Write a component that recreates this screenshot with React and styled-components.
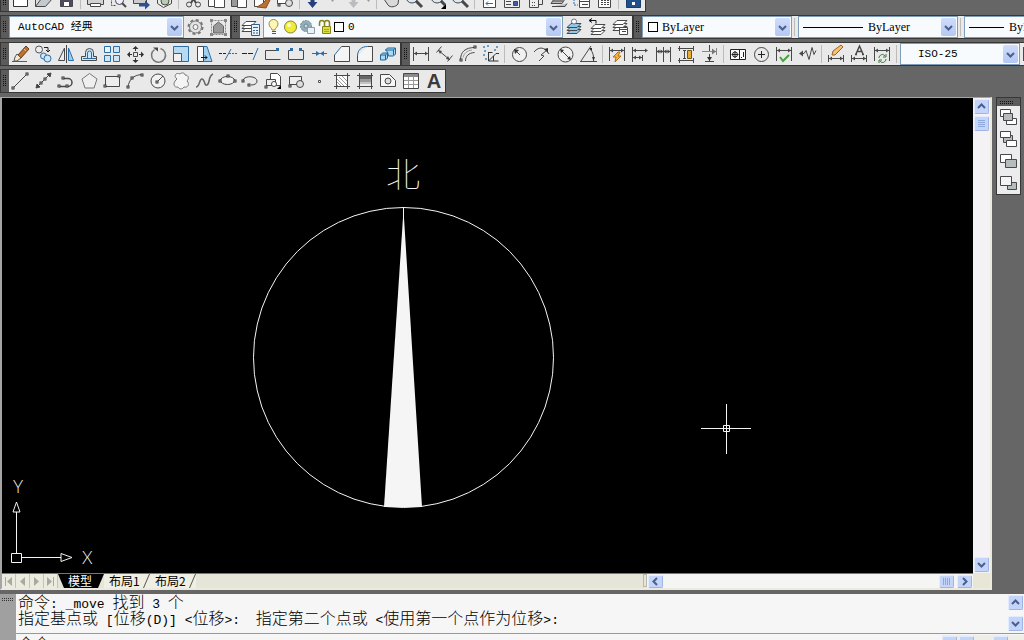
import React from 'react'
import styled, { createGlobalStyle, ThemeProvider } from 'styled-components'

const theme = {
  chrome: '#666666',
  bar: '#e9e9ea',
  edge: '#373737',
  field: '#f7fbfd',
  fieldBorder: '#7f9db9',
  canvas: '#000000',
  line: '#f5f5f5',
  beige: '#e6e6d8',
  scroll: '#c5d5fa',
  arrow: '#4a5f8c',
  cjk: '"Noto Sans CJK SC", sans-serif',
  mono: '"Liberation Mono", "Noto Sans CJK SC", monospace',
  serif: '"Liberation Serif", "Noto Sans CJK SC", serif',
}

const GlobalStyle = createGlobalStyle`
  *, *::before, *::after { box-sizing:border-box; }
  body {
    margin:0;
    background:${theme.chrome};
    font-family:${theme.cjk};
    font-size:12px;
    overflow:hidden;
  }
  button, select, input { font:inherit; margin:0; padding:0; color:inherit; }
`

/* Frame */
const Shell = styled.div`
  display:flex;
  flex-direction:column;
  height:100vh;
  overflow:hidden;
`
const ToolbarArea = styled.header`
  display:flex;
  flex-direction:column;
  gap:3px;
  padding-bottom:4px;
`
const ToolbarRow = styled.div`
  display:flex;
  align-items:flex-end;
  overflow:hidden;
  height:${p => (p.$tucked ? 12 : 24)}px;
`
const Bar = styled.div`
  flex:none;
  display:flex;
  height:24px;
  border:1px solid ${p => p.theme.edge};
  background:${p => p.theme.bar};
`
const Grip = styled.div`
  flex:none;
  width:8px;
  padding:4px 2px;
  background:#5b5b5b;
  &::before {
    content:'';
    display:block;
    height:13px;
    background:repeating-linear-gradient(#5b5b5b 0 1px, transparent 1px 2px), repeating-linear-gradient(90deg, #111 0 1px, #5b5b5b 1px 2px);
  }
`
const Divider = styled.div`
  flex:none;
  width:6px;
  padding:2px;
  &::before {
    content:'';
    display:block;
    width:1px;
    height:18px;
    background:#bcbcb8;
  }
`
const ToolButton = styled.button`
  flex:none;
  display:flex;
  align-items:center;
  justify-content:center;
  width:${p => p.$width || 23}px;
  height:22px;
  border:0;
  background:transparent;
  overflow:hidden;
  &:hover { background:#d3dcea; }
`
const Glyph = styled.svg`
  flex:none;
  display:block;
  fill:none;
  stroke:#484848;
`

/* Drop-downs */
const Combo = styled.label`
  flex:none;
  display:flex;
  align-items:center;
  width:${p => p.$width}px;
  height:22px;
  padding-left:${p => p.$indent || 4}px;
  border:1px solid ${p => p.theme.fieldBorder};
  background:${p => p.theme.field};
  color:#000;
`
const Select = styled.select`
  flex:1;
  min-width:0;
  height:20px;
  appearance:none;
  border:0;
  outline:0;
  background:transparent;
  font-family:${p => (p.$serif ? p.theme.serif : p.theme.mono)};
  font-size:${p => (p.$serif ? 12 : 11)}px;
`
const Drop = styled.span`
  flex:none;
  display:flex;
  align-items:center;
  justify-content:center;
  width:15px;
  height:18px;
  margin-right:1px;
  border-radius:2px;
  background:linear-gradient(#cfdcfb, #b5c8f3);
`
const Swatch = styled.span`
  flex:none;
  width:10px;
  height:10px;
  margin-right:4px;
  border:1px solid #000;
  background:#fff;
`
const LineSample = styled.span`
  flex:none;
  width:${p => p.$length}px;
  height:1px;
  margin-right:5px;
  background:#000;
`

/* Drawing window */
const Workspace = styled.main`
  flex:1;
  min-height:0;
  display:flex;
`
const DrawingWindow = styled.section`
  flex:1;
  min-width:0;
  display:grid;
  grid-template-columns:1fr 17px;
  grid-template-rows:1fr 15px;
  border:solid;
  border-width:1px 2px 2px 2px;
  border-color:#a5a5a5 #eceadf #eceadf #a5a5a5;
`
const Canvas = styled.svg`
  display:block;
  width:100%;
  height:100%;
  min-height:0;
  background:${p => p.theme.canvas};
  fill:none;
  stroke:${p => p.theme.line};
`
const CanvasText = styled.text`
  fill:${p => p.theme.line};
  stroke:none;
  font-family:${p => (p.$cjk ? p.theme.cjk : '"Lato", sans-serif')};
  font-size:${p => (p.$cjk ? 34 : 17)}px;
  font-weight:${p => (p.$cjk ? 100 : 300)};
`
const VScroll = styled.div`
  display:flex;
  flex-direction:column;
  align-items:center;
  gap:2px;
  padding:1px 0;
  background:#f4f2f4;
`
const HScroll = styled.div`
  display:flex;
  align-items:center;
  gap:3px;
  width:326px;
  padding:0 1px;
  background:#f5f5f3;
`
const Splitter = styled.span`
  flex:none;
  width:4px;
  height:13px;
  border:1px solid #b9b9a8;
  background:${p => p.theme.beige};
`
const Track = styled.span`
  flex:1;
`
const ScrollButton = styled.button`
  flex:none;
  display:flex;
  align-items:center;
  justify-content:center;
  width:15px;
  height:${p => p.$height || 15}px;
  border:1px solid #9fb5e4;
  border-top-color:#e3ebfe;
  border-left-color:#e3ebfe;
  border-radius:2px;
  background:${p => p.theme.scroll};
`
const Corner = styled.div`
  background:#e8e6d6;
`
const TabStrip = styled.div`
  display:flex;
  min-width:0;
  border-top:1px solid #77776f;
  background:${p => p.theme.beige};
`
const NavButton = styled.button`
  flex:none;
  display:flex;
  align-items:center;
  justify-content:center;
  width:14px;
  height:14px;
  border:0;
  border-right:1px solid #c4c4b6;
  background:#ebebe0;
`
const Tab = styled.button`
  position:relative;
  flex:none;
  width:46px;
  height:14px;
  border:0;
  padding-left:5px;
  background:#efefe4;
  color:#000;
  font-size:12px;
  line-height:14px;
  text-align:left;
  white-space:nowrap;
  &::after {
    content:'';
    position:absolute;
    top:0;
    right:3px;
    width:1px;
    height:14px;
    background:#55554f;
    transform:skewX(-23deg);
  }
  &[aria-selected='true'] {
    padding-left:10px;
    background:#000;
    color:#fff;
    clip-path:polygon(0 0, 100% 0, calc(100% - 6px) 100%, 6px 100%);
  }
  &[aria-selected='true']::after { display:none; }
`
const Spacer = styled.div`
  flex:1;
`

/* Draw order palette */
const Dock = styled.aside`
  flex:none;
  width:32px;
  padding-left:4px;
`
const Palette = styled.div`
  width:25px;
  border:1px solid ${p => p.theme.edge};
  background:#ececee;
`
const PaletteGrip = styled.div`
  height:8px;
  padding:2px 3px;
  background:#5b5b5b;
  &::before {
    content:'';
    display:block;
    width:14px;
    height:4px;
    background:repeating-linear-gradient(#5b5b5b 0 1px, transparent 1px 2px), repeating-linear-gradient(90deg, #111 0 1px, #5b5b5b 1px 2px);
  }
`

/* Command line */
const CommandPane = styled.section`
  flex:none;
  display:flex;
  height:46px;
  margin-top:4px;
  overflow:hidden;
  background:#f6f6f6;
  color:#000;
`
const CommandGrip = styled.div`
  flex:none;
  width:16px;
  padding:3px 2px;
  background:#a0a0a0;
  &::before {
    content:'';
    display:block;
    height:4px;
    background:repeating-linear-gradient(#a0a0a0 0 1px, transparent 1px 2px), repeating-linear-gradient(90deg, #333 0 1px, #a0a0a0 1px 2px);
  }
`
const CommandBody = styled.div`
  flex:1;
  min-width:0;
`
const HistoryRow = styled.div`
  display:flex;
  height:40px;
  border-bottom:1px solid #999;
`
const History = styled.div`
  flex:1;
  padding-left:2px;
`
const Line = styled.p`
  margin:0;
  height:16px;
  font-size:16px;
  font-weight:300;
  line-height:15px;
  white-space:pre;
`
const Ascii = styled.span`
  font-family:"Liberation Mono", monospace;
  font-size:13px;
`
const HistoryScroll = styled.div`
  flex:none;
  display:flex;
  flex-direction:column;
  justify-content:space-between;
  width:16px;
  padding:1px 0 2px;
`
const PromptRow = styled.div`
  display:flex;
  gap:2px;
  padding:1px 0 0 2px;
`
const Prompt = styled.label`
  flex:none;
  font-size:16px;
  font-weight:300;
  line-height:16px;
`
const PromptInput = styled.input`
  flex:1;
  min-width:0;
  height:16px;
  border:0;
  outline:0;
  background:transparent;
`
const PromptScroll = styled.div`
  flex:none;
  display:flex;
  gap:2px;
  width:82px;
  padding-top:1px;
  background:#efeee6;
`

const BLUE = '#2b6ea6'
const PALE = '#cfe6f6'

const Node = ({ x, y }) => <rect x={x - 1} y={y - 1} width="2" height="2" fill="#fff" stroke="#333" />
const Dot = ({ x, y, c = BLUE }) => <rect x={x} y={y} width="3" height="3" fill={c} stroke="none" />
const Extents = ({ y = 10.5, top = 4, bottom = 18 }) => (
  <>
    <path d={`M3.5 ${top}V${bottom}M18.5 ${top}V${bottom}M4 ${y}h14`} />
    <path d={`M4 ${y}l3-2v4zM18 ${y}l-3-2v4z`} fill="#484848" stroke="none" />
  </>
)
const Layers = ({ x = 0, y = 0, fill = '#fff' }) => (
  <g transform={`translate(${x} ${y})`} fill={fill}>
    <path d="M3 14.5h10l4-4h-10z" />
    <path d="M3 11.5h10l4-4h-10z" />
    <path d="M3 8.5h10l4-4h-10z" />
  </g>
)

// 23 x 22 grid, one entry for each tool
const icons = {
  new: <path d="M4.5 2.5h14v15h-14z" fill="#fff" stroke="#333" />,
  open: <><path d="M3.5 17.5v-12h5l2 2h7v3" fill="#ddd" /><path d="M3.5 17.5l6-8h11l-7 8z" fill="#c5c8cc" /></>,
  save: <><path d="M5.5 4.5h12v13h-12z" fill="#4b4b62" /><path d="M8.5 12.5h6v5h-6z" fill="#fff" /></>,
  print: <><path d="M3.5 8.5h16v7h-16z" fill="#d2d2d2" /><path d="M6.5 14.5h10v3h-10z" fill="#fff" /></>,
  preview: <><path d="M4.5 3.5v13h4" strokeDasharray="2 1" /><circle cx="12.5" cy="11.5" r="4" fill="#eef" /><path d="M15 14l4 4" strokeWidth="2" /></>,
  publish: <><path d="M3.5 8.5h13v6h-13z" fill="#ccc" /><path d="M9 14.5h6v-3l5 4.5-5 4.5v-3H9z" fill="#2a5294" stroke="none" /></>,
  dwf: <><path d="M4.5 5.5l9-2 5 4v7l-8 4-6-4z" fill="#e9ecea" /><circle cx="12" cy="12" r="4" fill="#b8ccb3" /></>,
  cut: <><path d="M8 4l6 10M15 4L9 14" strokeWidth="2" /><circle cx="7" cy="15.5" r="2.5" /><circle cx="16" cy="15.5" r="2.5" /></>,
  copyclip: <><path d="M3.5 4.5h9v13h-9z" fill="#fff" /><path d="M9.5 7.5h10v11h-10z" fill="#fff" /></>,
  paste: <><path d="M3.5 4.5h12v13h-12z" fill="#999" /><path d="M9.5 9.5h9v9h-9z" fill="#fff" /></>,
  match: <><path d="M3.5 8.5h9v9h-9z" fill="#fff" /><path d="M18 8l-7 7-5 3 9 1 4-8z" fill="#b87333" stroke="#8a4c22" /></>,
  blockedit: <><path d="M3.5 8.5h10v6h-10z" fill="#fff" /><circle cx="15" cy="14" r="3.5" fill="#ddd" /><Node x={5} y={16} /></>,
  undo: <path d="M9.5 4h4v9h3l-5 6-5-6h3z" fill="#24407e" stroke="none" />,
  redo: <path d="M9.5 4h4v9h3l-5 6-5-6h3z" fill="#bcbcc0" stroke="none" />,
  more: <path d="M10 11h3l-1.5 2z" fill="#999" stroke="none" />,
  pan: <path d="M4 10l4 6c2 3 8 2 10-1l1-7-3-2-4 4-3-5z" fill="#d9d9d9" />,
  zoom: <><circle cx="9" cy="8" r="6" fill="#dfe8f0" /><path d="M13 12l6 6" strokeWidth="3" /></>,
  zoomWin: <><circle cx="11" cy="8" r="6" fill="#dfe8f0" /><path d="M15 12l4 4" strokeWidth="3" /><path d="M20 15v5h-5z" fill="#000" stroke="none" /></>,
  props: <><path d="M5.5 3.5h12v15h-12z" fill="#fff" /><path d="M8 14.5h7M8 14.5l2-2M8 14.5l2 2" stroke={BLUE} /></>,
  center: <><path d="M3.5 4.5h15v14h-15z" fill="#eee" /><path d="M12.5 12.5h4v4h-4z" fill="#445ea6" /><path d="M5 12.5h5M5 15.5h5" /></>,
  palettes: <><path d="M5.5 3.5h9v15h-9z" fill="#eee" /><path d="M8 13.5h4M8 16.5h4" strokeDasharray="1 1" /><path d="M14.5 9.5h4v6h-4z" /></>,
  sheet: <path d="M4 14.5h11l4-6H8zM5 17.5h13l2-3M6 12h10" fill="#bbb" />,
  markup: <><path d="M4 4v12h4" stroke={BLUE} strokeDasharray="2 1" /><path d="M9.5 9.5h10v9h-10z" fill="#fff" /><path d="M9 12.5h10M12 15.5h6" /></>,
  calc: <><path d="M5.5 3.5h12v15h-12z" fill="#fff" /><path d="M8 11.5h8M8 13.5h8M8 15.5h8" strokeDasharray="2 1" /></>,
  help: <><path d="M4.5 3.5h14v15h-14z" fill="#1f4f8c" stroke="#1a3d6c" /><path d="M11.5 4v7M11.5 13v3" stroke="#fff" strokeWidth="3" /></>,

  gear: <><circle cx="11.5" cy="11" r="7" strokeWidth="2" strokeDasharray="3 2.5" stroke="#777" /><circle cx="11.5" cy="11" r="6" fill="#e4e4e4" stroke="#777" /><circle cx="11.5" cy="11" r="2.5" fill="#f4f4f4" stroke="#777" /></>,
  wsSave: <><path d="M4.5 4.5h14v14h-14z" strokeDasharray="2 1" stroke="#888" /><path d="M3 3h3v3H3zM17 3h3v3h-3zM3 17h3v3H3zM17 17h3v3h-3z" fill="#888" stroke="none" /><path d="M6.5 10l5-4 5 4v7h-10z" fill="#999" stroke="#666" /></>,
  layerProps: <><Layers y={1} x={-1} /><path d="M11.5 8.5h8v11h-8z" fill="#e7f2fb" stroke="#345f8c" /><path d="M13 11.5h5M13 14.5h2M16 14.5h2M13 17h2M16 17h2" stroke="#345f8c" /></>,
  layerCurrent: <><Layers y={3} x={1} fill="#8fc8ea" /><circle cx="11" cy="5.5" r="2.5" fill="#fff" stroke="#6c7780" /></>,
  layerPrev: <><Layers y={4} x={2} /><path d="M4 4.5h6v3M6 2.5l-3 2 3 2" stroke="#111" /></>,
  layerStates: <><Layers y={0} x={1} /><path d="M10.5 11.5h8v7h-8z" fill="#fff" /><path d="M11 13.5h7M13 15.5h4" /></>,

  erase: <><path d="M3 18.5h15" stroke="#9b4a20" /><path d="M9 12l8-9 3 3-8 9z" fill="#b87333" stroke="#6b3d1c" /><path d="M8 11l4 4-4 3H5l1-4z" fill="#f7e9d2" stroke="#555" /><path d="M15 6l2 2" stroke="#efc389" /></>,
  copy: <><circle cx="7" cy="6.5" r="3.5" fill="#eee" stroke="#555" /><circle cx="11.5" cy="13" r="3" fill={PALE} stroke={BLUE} /><circle cx="15.5" cy="15.5" r="3.5" fill={PALE} stroke={BLUE} /><path d="M12 4.5h4v4M14 7l2 2 2-2" stroke="#222" /></>,
  mirror: <><path d="M9.5 5v12.5h-6z" fill="#eee" /><path d="M11.5 2v18" /><path d="M13.5 5v12.5h5z" fill="#9ecdec" stroke={BLUE} /></>,
  offset: <><path d="M3.5 17.5v-4h4v-4a4 4 0 0 1 8 0v4h3v4z" fill={PALE} /><path d="M5 15.5h13M9.5 15v-5a2 2 0 0 1 4 0v5" stroke={BLUE} /></>,
  array: <g fill={PALE} stroke={BLUE}><path d="M3.5 3.5h6v6h-6z" fill="#f0f0f0" /><path d="M12.5 3.5h6v6h-6zM3.5 12.5h6v6h-6zM12.5 12.5h6v6h-6z" /></g>,
  move: <><path d="M9.5 9.5h4v4h-4z" /><path d="M11.5 5v3M11.5 15v3M5 11.5h3M15 11.5h3" stroke="#333" /><path d="M11.5 3l3 3h-6zM11.5 20l3-3h-6zM3 11.5l3-3v6zM20 11.5l-3-3v6z" fill="#333" stroke="none" /></>,
  rotate: <><path d="M7.5 6.5a7 7 0 1 0 6-1" strokeWidth="1.5" stroke="#777" /><path d="M6 4.5h5v4z" fill="#444" stroke="none" /></>,
  scale: <><path d="M3.5 3.5h15v15h-15z" fill="#b8daf0" stroke={BLUE} /><path d="M3.5 18.5v-8h8v8z" fill="#f0f0f0" stroke="#555" /></>,
  stretch: <><path d="M10 3.5h4l5 15h-9z" fill="#9fd0f0" stroke={BLUE} /><path d="M4.5 3.5h6v15h-6z" fill="#fafafa" /><path d="M8 14.5h6M12 12.5l2 2-2 2" stroke="#111" /></>,
  trim: <><path d="M3 10.5h3M7 10.5h3" stroke="#222" /><path d="M13 10.5h8" stroke={BLUE} strokeDasharray="2 1" /><path d="M9 17l6-11" stroke={BLUE} /></>,
  extend: <><path d="M3 10.5h12" stroke="#222" strokeDasharray="5 1" /><path d="M14 17l5-12" stroke={BLUE} /></>,
  breakAt: <><path d="M15 7.5H3.5v9h15" /><Dot x={14} y={5} /></>,
  breakTwo: <><path d="M6 7.5H3.5v9h15v-9h-3" /><Dot x={5} y={5} /><Dot x={14} y={5} /></>,
  join: <><path d="M4 10.5h15" stroke={BLUE} /><path d="M8 8l4 2.5-4 2.5zM16 8l-4 2.5 4 2.5z" fill={BLUE} stroke="none" /></>,
  chamfer: <><path d="M3.5 12v6.5h15v-15h-8" fill="#f5f5f5" /><path d="M3.5 12l7-8.5" stroke={BLUE} /></>,
  fillet: <><path d="M3.5 13v5.5h15v-15h-5" fill="#f5f5f5" /><path d="M3.5 13c0-6 4-9.5 10-9.5" stroke={BLUE} /></>,
  explode: <g fill="#a9daf5" stroke="#1f6799"><path d="M3.5 12l2-2h5v5l-2 2h-5zM3.5 12h5v5M8.5 12l2-2" /><path d="M8.5 7l2-2h8v6l-2 2h-5l-1-4zM8.5 7h8v5M16.5 7l2-2" /></g>,

  dimLinear: <Extents />,
  dimAligned: <><path d="M5 7l12 10M3.5 9.5l5-6M14.5 18.5l5-6" /><path d="M5 7l4 1-2 3zM17 17l-4-1 2-3z" fill="#484848" stroke="none" /></>,
  dimArc: <><path d="M4.5 17C4.5 9 9 4.5 19 4.5M9.5 18c0-5 3-8 9-8.5" /><path d="M7 14.500c1-4 4-7 9-7.500" stroke="#999" /><Node x={5} y={17} /><Node x={19} y={4} /></>,
  dimOrd: <><path d="M9.5 9v9h10M9.5 18L17 10.5h3M14.5 13v5M9.5 9.5h4" stroke="#333" /><path d="M4 3h2v2H4zM8 2h2v2H8zM17 3h2v2h-2zM5 7h2v2H5zM4 11h2v2H4zM6 15h2v2H6zM15 6h2v2h-2z" fill="#6d9cc4" stroke="none" /></>,
  dimRadius: <><circle cx="11.5" cy="11.5" r="7" fill="#f1f1f1" /><path d="M12 12L7 7" /><path d="M6 6l5 1-4 4z" fill="#333" stroke="none" /></>,
  dimJog: <><path d="M3 9c5-6 11-5 15 2M8 18l5-5-3-1 6-5" /><path d="M17 5v5l-4-4z" fill="#333" stroke="none" /></>,
  dimDia: <><circle cx="11.5" cy="11.5" r="7.5" fill="#f1f1f1" /><path d="M6 6l11 11" /><path d="M6 6l4 1-3 3zM17 17l-4-1 3-3z" fill="#333" stroke="none" /></>,
  dimAng: <><path d="M3 18.5h17M4 18l10-15M13 6c3 3 4 7 3.5 12" /><path d="M12 5h3v3zM15 14h3l-1.5 4z" fill="#333" stroke="none" /></>,
  quick: <><Extents y={7.5} /><path d="M12 9l-5 5h3l-1 5 6-6h-3l2-4z" fill="#f6b53c" stroke="#b3701b" /></>,
  baseline: <><path d="M3.5 4v15M13.5 12v6M4 7.5h14M4 14.5h9" /><path d="M4 7.5l3-2v4zM19 7.5l-3-2v4zM4 14.5l3-2v4zM13 14.5l-3-2v4z" fill="#484848" stroke="none" /></>,
  continueDim: <><path d="M4.5 4v15M11.5 4v15M18.5 4v15M5 8.5h13" /><path d="M11.5 8.5l-3-2v4zM11.5 8.5l3-2v4zM18.5 8.5l-3-2v4zM4.5 8.5l3-2v4z" fill="#484848" stroke="none" /></>,
  dimSpace: <><path d="M3 5.5h16M3 17.5h16M4.5 3v5M18.5 3v5M4.5 15v5M18.5 15v5M8 7.5h3M8 15.5h3M9.5 7v9" /><path d="M12.5 7.5h4v8h-4z" fill="#e6ad33" stroke="#765514" /></>,
  dimBreak: <><path d="M11.5 2v6M7 18.5h9M11.5 11v7" /><path d="M4 8.5h14M18.5 5v7" stroke="#888" /><path d="M18 8.5l-4-3v6z" fill="#777" stroke="none" /><path d="M9 14h5l-2.5 4z" fill="#333" stroke="none" /></>,
  tolerance: <><path d="M3.5 6.5h15v10h-15zM12.5 7v9" fill="#fafafa" stroke="#222" /><circle cx="8" cy="11.5" r="2.5" stroke="#222" /><path d="M4.5 11.5h7M8 8v7M16.5 9v5M14 14.5h1" stroke="#222" /></>,
  centerMark: <><circle cx="11.5" cy="11.5" r="7" /><path d="M8 11.5h7M11.5 8v7" stroke="#222" /></>,
  inspect: <><Extents y={7.5} /><path d="M7 14l3 4 6-6" stroke="#45a33c" strokeWidth="2" /></>,
  jogLine: <><path d="M4 10.5h4l2-3 3 9 3-12 2 7 2-4" /><path d="M3 10.5l4-3v6z" fill="#484848" stroke="none" /></>,
  dimEdit: <><Extents y={15.5} top={12} bottom={19} /><path d="M7 12l1-4 8-6 2 2-8 8z" fill="#f5c072" stroke="#9a6526" /></>,
  dimTextEdit: <><Extents y={15.5} top={12} bottom={19} /><path d="M7 11.5h2M14 11.5h2M8 11l3.5-8 3.5 8M9 8.5h5" strokeWidth="1.5" /></>,
  dimUpdate: <><Extents y={7.5} /><path d="M8 15c0-3 4-5 6-2M15 11v3h-3M15 16c0 3-4 5-6 2M8 20v-3h3" stroke="#37793a" /></>,

  line: <><path d="M4 18L18 4" /><Node x={4} y={18} /><Node x={18} y={4} /></>,
  xline: <><path d="M4 18L18 4" /><path d="M4 18l1-4 3 3zM19 3l-4 1 3 3z" fill="#444" /><Node x={9} y={13} /><Node x={13} y={9} /></>,
  pline: <><path d="M4 16.5h9a4 4 0 0 0 0-8H8" strokeWidth="1.5" /><Node x={4} y={16} /><Node x={12} y={16} /><Node x={8} y={8} /></>,
  polygon: <path d="M11.5 3.5l7.5 5.5-3 9h-9l-3-9z" fill="#efefef" stroke="#777" />,
  rect: <><path d="M4.5 6.5h14v10h-14z" fill="#eee" /><Node x={4} y={16} /><Node x={18} y={6} /></>,
  arc: <><path d="M4 17C5 10 9 5 18 4.5" /><Node x={4} y={17} /><Node x={8} y={8} /><Node x={18} y={5} /></>,
  circle: <><circle cx="11" cy="11" r="7" fill="#f1f1f1" /><path d="M11 11l5-5" /><Node x={10} y={12} /></>,
  cloud: <path d="M7 9c-4-3-1-7 3-5 2-2 5-1 5 1 4 0 4 4 2 6 3 3 1 7-3 6-2 3-5 2-6 0-4 1-6-4-1-8z" fill="#f4f4f4" stroke="#777" />,
  spline: <path d="M3 17c4 0 3-8 6-8s2 7 5 6 1-9 6-11" stroke="#666" strokeWidth="1.5" />,
  ellipse: <><ellipse cx="11.5" cy="10.5" rx="7" ry="4" fill="#f1f1f1" /><Node x={4} y={11} /><Node x={12} y={6} /><Node x={19} y={11} /></>,
  ellipseArc: <><path d="M4 10c2-5 14-4 14 1 0 3-3 4-6 4" /><Node x={4} y={11} /><Node x={10} y={15} /></>,
  insert: <><path d="M8.5 3.5h7l3 3v9h-10z" fill="#fff" /><path d="M4.5 9.5h9v6h-9z" fill="#eee" /><circle cx="12" cy="14" r="2.5" fill="#fff" /><Node x={4} y={17} /><path d="M19 15v4h-4z" fill="#000" stroke="none" /></>,
  block: <><path d="M4.5 6.5h12v8h-12z" fill="#eee" /><circle cx="15" cy="14" r="3.5" fill="#ddd" /><Node x={5} y={16} /></>,
  point: <path d="M10.5 10.5h2v2h-2z" fill="#fff" stroke="#555" />,
  hatch: <><path d="M5.5 5.5h11v11h-11z" fill="#fff" /><path d="M3 5.5h16M3 16.5h16M5.5 3v16M16.5 3v16" /><path d="M6 9l7 7M6 12l4 4M8 7l8 8M11 6l5 5M6 15l1 1" stroke="#999" /></>,
  gradient: <><path d="M5.5 5.5h12v11h-12z" fill="#eee" /><path d="M6 6h11v3H6z" fill="#666" stroke="none" /><path d="M6 9h11v3H6z" fill="#999" stroke="none" /><path d="M6 12h11v2H6z" fill="#c3c3c3" stroke="none" /><path d="M3 5.5h16M3 16.5h16M5.5 3v16M17.5 3v16" /></>,
  region: <><path d="M3.5 4.5h9l6 6v6h-15z" fill="#f7f7f7" /><circle cx="11" cy="11" r="3" fill="#ddd" /></>,
  table: <><path d="M3.5 3.5h15v15h-15z" fill="#fff" /><path d="M4 4h14v3H4z" fill="#8b8b8b" stroke="none" /><path d="M4 10.5h14M4 14.5h14M8.5 7v11M13.5 7v11" stroke="#999" /></>,

  front: <><path d="M3.5 3.5h10v7h-10z" fill="#fff" /><path d="M9.5 12.5h10v6h-10z" fill="#fff" /><path d="M6.5 7.5h9v7h-9z" fill="#b5bcbc" /></>,
  back: <><path d="M6.5 7.5h9v7h-9z" fill="#b5bcbc" /><path d="M3.5 3.5h10v6h-10zM9.5 12.5h10v6h-10z" fill="#fff" /></>,
  above: <><path d="M3.5 4.5h11v8h-11z" fill="#fff" /><path d="M8.5 9.5h11v8h-11z" fill="#b5bcbc" /></>,
  under: <><path d="M10.5 10.5h9v7h-9z" fill="#b5bcbc" /><path d="M3.5 4.5h11v9h-11z" fill="#f2f4f8" /></>,
}

const Tool = ({ icon, label, width }) => (
  <ToolButton aria-label={label || icon} $width={width}>
    <Glyph width="23" height="22" viewBox="0 0 23 22">{icons[icon]}</Glyph>
  </ToolButton>
)

// '|' stands for a divider
const Tools = ({ items }) => items.split(' ').map((name, i) => (
  name === '|' ? <Divider key={i} /> : <Tool key={i} icon={name} />
))

const turns = { up: 180, down: 0, left: 90, right: 270 }
const Chevron = ({ to = 'down' }) => (
  <Glyph width="9" height="9" viewBox="0 0 9 9">
    <path d="M1 3l3.5 3.5L8 3" stroke={theme.arrow} strokeWidth="2" transform={`rotate(${turns[to]} 4.5 4.5)`} />
  </Glyph>
)

const Picker = ({ width, indent, label, value, serif, children }) => (
  <Combo $width={width} $indent={indent}>
    {children}
    <Select aria-label={label} $serif={serif} defaultValue={value}>
      <option>{value}</option>
    </Select>
    <Drop><Chevron /></Drop>
  </Combo>
)

const LayerState = () => (
  <Glyph width="69" height="20" viewBox="0 0 69 20">
    <path d="M7 13c0-2-3-3-3-6a4.5 4.5 0 0 1 9 0c0 3-3 4-3 6z" fill="#fdf6b4" stroke="#a08c3c" />
    <path d="M7 14.5h4M7 16.5h4" stroke="#555" />
    <circle cx="25.5" cy="10" r="6" fill="#f0ea38" stroke="#86843a" />
    <circle cx="24" cy="8" r="2" fill="#fcfbc0" stroke="none" />
    <circle cx="41" cy="9" r="5.5" fill="#91aeba" stroke="#6b8794" strokeDasharray="2 1" />
    <circle cx="41" cy="9" r="2" fill="#c4d8df" stroke="#6b8794" />
    <path d="M42.5 10.5h7v6h-7z" fill="#e9f2f5" stroke="#8ba0aa" />
    <path d="M54.5 9V6a2.5 2.5 0 0 1 5 0v3M59.5 9V6a2.5 2.5 0 0 1 5 0v4" stroke="#85831f" strokeWidth="1.5" />
    <path d="M57.5 9.5h8v7h-8z" fill="#dede3d" stroke="#85831f" />
    <path d="M59 12.5h5M59 14.5h5" stroke="#aaa92a" />
  </Glyph>
)

const circlePoints = (cx, cy, r, sides) => Array.from({ length: sides }, (_, i) => {
  const a = (i / sides) * Math.PI * 2
  return `${(cx + r * Math.sin(a)).toFixed(1)},${(cy - r * Math.cos(a)).toFixed(1)}`
}).join(' ')

const Drawing = () => (
  <Canvas role="img" aria-label="指北针">
    <CanvasText $cjk x="384" y="89">北</CanvasText>
    <polygon points={circlePoints(401.5, 259.5, 150, 56)} />
    <path d="M401.5 109v12" />
    <polygon points="401.5,112 420,409 382,409" fill={theme.line} stroke="none" />
    <path d="M699 330.5h50M724.5 306v50M721.5 327.5h6v6h-6z" />
    <path d="M9.5 455.5h10v9h-10zM14.5 455v-41M20 459.5h39" />
    <path d="M14.5 404l3.5 10h-7zM70 459.5l-11-4v8z" />
    <CanvasText x="11" y="395">Y</CanvasText>
    <CanvasText x="80" y="466">X</CanvasText>
  </Canvas>
)

const NavArrow = ({ d }) => (
  <Glyph width="11" height="11" viewBox="0 0 11 11">
    <path d={d} fill="#aaaa9c" stroke="none" />
  </Glyph>
)

// Latin runs are set at half the width of a Chinese character
const Console = ({ text }) => (
  <Line>
    {text.split(/([\x20-\x7e]+)/).map((part, i) => (i % 2 ? <Ascii key={i}>{part}</Ascii> : part))}
  </Line>
)

const App = () => {
  return (
    <ThemeProvider theme={theme}>
      <GlobalStyle />
      <Shell>
        <ToolbarArea>
          <ToolbarRow $tucked>
            <Bar>
              <Grip />
              <Tools items="new open save | print preview publish dwf | cut copyclip paste match blockedit |" />
              <Tool icon="undo" width={18} />
              <Tool icon="more" label="undo list" />
              <Tool icon="redo" width={18} />
              <Tool icon="more" label="redo list" width={12} />
              <Tools items="| pan zoom zoomWin zoom | props center palettes sheet markup calc | help" />
            </Bar>
          </ToolbarRow>

          <ToolbarRow>
            <Bar>
              <Grip />
              <Picker width={175} indent={8} label="工作空间" value="AutoCAD 经典" />
              <Tools items="gear wsSave" />
            </Bar>
            <Bar>
              <Grip />
              <Tools items="layerProps" />
              <Picker width={300} indent={1} label="图层" value="0">
                <LayerState />
                <Swatch />
              </Picker>
              <Tools items="layerCurrent layerPrev layerStates" />
            </Bar>
            <Bar>
              <Grip />
              <Picker width={150} indent={5} label="颜色" value="ByLayer" serif>
                <Swatch />
              </Picker>
              <Divider />
              <Picker width={160} indent={4} label="线型" value="ByLayer" serif>
                <LineSample $length={60} />
              </Picker>
              <Divider />
              <Picker width={160} indent={4} label="线宽" value="ByLayer" serif>
                <LineSample $length={35} />
              </Picker>
            </Bar>
          </ToolbarRow>

          <ToolbarRow>
            <Bar>
              <Grip />
              <Tools items="erase copy mirror offset array move rotate scale stretch trim extend breakAt breakTwo join chamfer fillet explode" />
            </Bar>
            <Bar>
              <Grip />
              <Tools items="dimLinear dimAligned dimArc dimOrd | dimRadius dimJog dimDia dimAng | quick baseline continueDim dimSpace dimBreak | tolerance centerMark inspect jogLine | dimEdit dimTextEdit dimUpdate |" />
              <Picker width={120} indent={17} label="标注样式" value="ISO-25" />
              <Tools items="dimLinear" />
            </Bar>
          </ToolbarRow>

          <ToolbarRow>
            <Bar>
              <Grip />
              <Tools items="line xline pline polygon rect arc circle cloud spline ellipse ellipseArc insert block point hatch gradient region table" />
              <ToolButton aria-label="多行文字" $width={22}>
                <Glyph width="22" height="22" viewBox="0 0 22 22">
                  <text x="11" y="18" textAnchor="middle" fill="#3a3a3a" stroke="none" fontFamily="Liberation Sans, sans-serif" fontWeight="700" fontSize="20">A</text>
                </Glyph>
              </ToolButton>
            </Bar>
          </ToolbarRow>
        </ToolbarArea>

        <Workspace>
          <DrawingWindow>
            <Drawing />
            <VScroll>
              <ScrollButton aria-label="向上"><Chevron to="up" /></ScrollButton>
              <ScrollButton aria-label="滚动块">
                <Glyph width="9" height="9" viewBox="0 0 9 9"><path d="M1 1.5h7M1 3.5h7M1 5.5h7M1 7.5h7" stroke="#8fa8dc" /></Glyph>
              </ScrollButton>
              <Track />
              <ScrollButton aria-label="向下"><Chevron /></ScrollButton>
            </VScroll>
            <TabStrip role="tablist">
              <NavButton aria-label="第一个"><NavArrow d="M2 1h1v9H2zM9 1v9L4 5.5z" /></NavButton>
              <NavButton aria-label="上一个"><NavArrow d="M8 1v9L3 5.5z" /></NavButton>
              <NavButton aria-label="下一个"><NavArrow d="M3 1v9l5-4.5z" /></NavButton>
              <NavButton aria-label="最后一个"><NavArrow d="M8 1h1v9H8zM2 1v9l5-4.5z" /></NavButton>
              <Tab role="tab" aria-selected="true">模型</Tab>
              <Tab role="tab" aria-selected="false">布局1</Tab>
              <Tab role="tab" aria-selected="false">布局2</Tab>
              <Spacer />
              <Splitter />
              <HScroll>
                <ScrollButton $height={13} aria-label="向左"><Chevron to="left" /></ScrollButton>
                <Track />
                <ScrollButton $height={13} aria-label="水平滚动块">
                  <Glyph width="9" height="9" viewBox="0 0 9 9"><path d="M1.5 1v7M3.5 1v7M5.5 1v7M7.5 1v7" stroke="#8fa8dc" /></Glyph>
                </ScrollButton>
                <ScrollButton $height={13} aria-label="向右"><Chevron to="right" /></ScrollButton>
              </HScroll>
            </TabStrip>
            <Corner />
          </DrawingWindow>
          <Dock>
            <Palette>
              <PaletteGrip />
              <Tools items="front back above under" />
            </Palette>
          </Dock>
        </Workspace>

        <CommandPane>
          <CommandGrip />
          <CommandBody>
            <HistoryRow>
              <History>
                <Console text="命令: _move 找到 3 个" />
                <Console text="指定基点或 [位移(D)] <位移>:  指定第二个点或 <使用第一个点作为位移>:" />
              </History>
              <HistoryScroll>
                <ScrollButton aria-label="历史向上"><Chevron to="up" /></ScrollButton>
                <ScrollButton aria-label="历史向下"><Chevron /></ScrollButton>
              </HistoryScroll>
            </HistoryRow>
            <PromptRow>
              <Prompt htmlFor="command">命令:</Prompt>
              <PromptInput id="command" />
              <PromptScroll>
                <ScrollButton aria-label="命令向左"><Chevron to="up" /></ScrollButton>
                <ScrollButton aria-label="命令滚动块" />
                <Track />
                <ScrollButton aria-label="命令向右"><Chevron to="up" /></ScrollButton>
                <Track />
              </PromptScroll>
            </PromptRow>
          </CommandBody>
        </CommandPane>
      </Shell>
    </ThemeProvider>
  )
}

export default App
